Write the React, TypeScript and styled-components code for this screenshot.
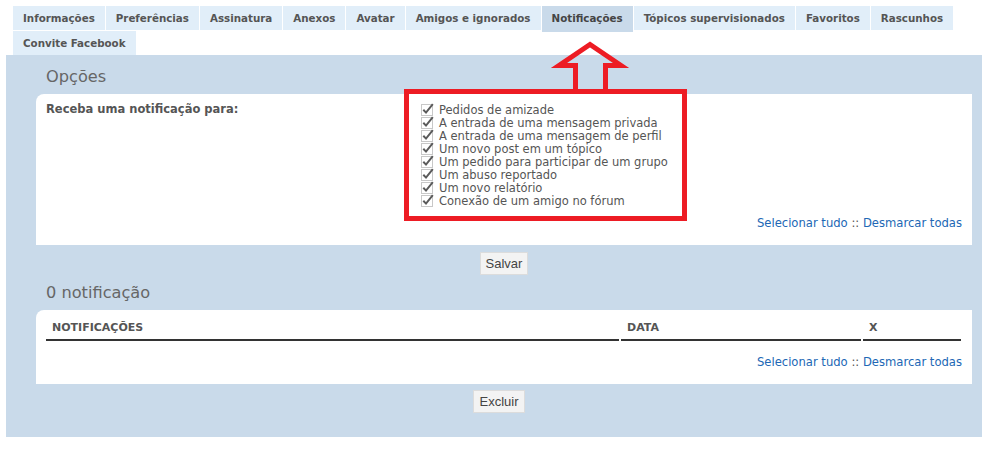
import React from 'react';
import styled, { createGlobalStyle } from 'styled-components';

const GlobalStyle = createGlobalStyle`
    html, body {
        margin: 0;
        padding: 0;
        background: #fff;
    }
    body {
        font-family: "DejaVu Sans", Verdana, sans-serif;
        font-size: 11px;
        color: #555;
    }
`;

const Page = styled.div`
    position: relative;
    width: 988px;
    height: 450px;
    overflow: hidden;
`;

const TabBar = styled.ul`
    display: flex;
    flex-wrap: wrap;
    align-items: flex-start;
    gap: 1px;
    list-style: none;
    margin: 0;
    padding: 6px 30px 0 13px;
`;

const Tab = styled.li<{ $active?: boolean }>`
    height: ${(p) => (p.$active ? '26px' : '24px')};
    line-height: 24px;
    margin-bottom: ${(p) => (p.$active ? '-2px' : '0')};
    padding: 0 10px;
    background: ${(p) => (p.$active ? '#c9daea' : '#e1eef9')};
    color: ${(p) => (p.$active ? '#444' : '#555')};
    font-weight: bold;
    font-size: 10.3px;
    white-space: nowrap;
`;

const Panel = styled.div`
    margin: 0 6px;
    padding: 12px 0 16px;
    background: #c9daea;
`;

const Heading = styled.h2`
    margin: 0 0 7px 40px;
    font-size: 16.2px;
    line-height: 20px;
    font-weight: normal;
    color: #666;
`;

const Card = styled.div`
    margin: 0 10px 0 30px;
    padding: 9px 10px 15px;
    background: #fff;
    border-top-left-radius: 8px;
`;

const OptionRow = styled.div`
    display: grid;
    grid-template-columns: 375px 1fr;
`;

const Label = styled.div`
    font-weight: bold;
    font-size: 11.5px;
    line-height: 13px;
    color: #555;
`;

const CheckList = styled.ul`
    list-style: none;
    margin: 0;
    padding: 0;
`;

const CheckItem = styled.li`
    display: flex;
    align-items: center;
    gap: 5px;
    height: 13px;
    font-size: 11.5px;
    color: #555;
    white-space: nowrap;
`;

const Links = styled.div<{ $gap: number }>`
    margin-top: ${(p) => p.$gap}px;
    text-align: right;
    font-size: 11.6px;
    line-height: 14px;
    color: #555;
`;

const Link = styled.a`
    color: #2167b5;
    text-decoration: none;
`;

const ButtonRow = styled.div<{ $top: number; $left: number }>`
    display: flex;
    justify-content: center;
    margin: ${(p) => p.$top}px 10px 8px ${(p) => p.$left}px;
`;

const Button = styled.button`
    height: 23px;
    padding: 0 5px;
    background: #f3f3f3;
    border: 1px solid #dcdcdc;
    font-family: "Liberation Sans", Arial, sans-serif;
    font-size: 13px;
    color: #444;
`;

const Table = styled.div`
    display: grid;
    grid-template-columns: 573px 240px 98px;
    column-gap: 2px;
`;

const HeadCell = styled.div`
    padding: 2px 6px 4px;
    line-height: 14px;
    font-weight: bold;
    color: #555;
    border-bottom: 2px solid #333;
`;

const Overlay = styled.svg`
    position: absolute;
    top: 0;
    left: 0;
    pointer-events: none;
`;

const tabs = [
    'Informações',
    'Preferências',
    'Assinatura',
    'Anexos',
    'Avatar',
    'Amigos e ignorados',
    'Notificações',
    'Tópicos supervisionados',
    'Favoritos',
    'Rascunhos',
    'Convite Facebook',
];

const options = [
    'Pedidos de amizade',
    'A entrada de uma mensagem privada',
    'A entrada de uma mensagem de perfil',
    'Um novo post em um tópico',
    'Um pedido para participar de um grupo',
    'Um abuso reportado',
    'Um novo relatório',
    'Conexão de um amigo no fórum',
];

function CheckMark() {
    return (
        <svg width="13" height="13" viewBox="0 0 13 13">
            <rect x="0.5" y="1.5" width="11" height="11" fill="#fff" stroke="#c8c8c8" />
            <path d="M2.3 6.8 L5 9.6 L11.8 1.2" fill="none" stroke="#5a5a5a" strokeWidth="2" />
        </svg>
    );
}

function SelectLinks({ gap }: { gap: number }) {
    return (
        <Links $gap={gap}>
            <Link href="#">Selecionar tudo</Link> :: <Link href="#">Desmarcar todas</Link>
        </Links>
    );
}

export default function App(): JSX.Element {
    return (
        <Page>
            <GlobalStyle />
            <TabBar>
                {tabs.map((t) => (
                    <Tab key={t} $active={t === 'Notificações'}>
                        {t}
                    </Tab>
                ))}
            </TabBar>

            <Panel>
                <Heading>Opções</Heading>
                <Card>
                    <OptionRow>
                        <Label>Receba uma notificação para:</Label>
                        <CheckList>
                            {options.map((o) => (
                                <CheckItem key={o}>
                                    <CheckMark />
                                    {o}
                                </CheckItem>
                            ))}
                        </CheckList>
                    </OptionRow>
                    <SelectLinks gap={9} />
                </Card>
                <ButtonRow $top={7} $left={30}>
                    <Button>Salvar</Button>
                </ButtonRow>

                <Heading>0 notificação</Heading>
                <Card>
                    <Table>
                        <HeadCell>NOTIFICAÇÕES</HeadCell>
                        <HeadCell>DATA</HeadCell>
                        <HeadCell>X</HeadCell>
                    </Table>
                    <SelectLinks gap={14} />
                </Card>
                <ButtonRow $top={6} $left={20}>
                    <Button>Excluir</Button>
                </ButtonRow>
            </Panel>

            <Overlay width="988" height="450">
                <rect x="406.5" y="91.5" width="278" height="127" fill="none" stroke="#ed1c24" strokeWidth="5" />
                <path
                    d="M575.5 92 V65.5 H559 L590 44.5 L621 65.5 H605.5 V92"
                    fill="none"
                    stroke="#ed1c24"
                    strokeWidth="5"
                />
            </Overlay>
        </Page>
    );
}
